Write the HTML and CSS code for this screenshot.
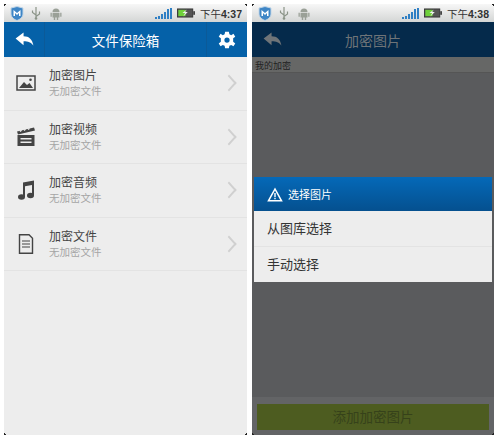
FILE: index.html
```html
<!DOCTYPE html>
<html>
    <head>
        <title>文件保险箱</title>
        <meta charset="utf-8">
        <link rel="stylesheet" href="styles.css">
    </head>
    <body>
        <main class="screens">
            <!-- vault list -->
            <section class="phone">
                <div class="status-bar">
                    <svg class="shield" viewBox="0 0 14 15"><path d="M1 2 L7 0.500 L13 2 V8 C13 11 10 13.500 7 14.500 C4 13.500 1 11 1 8 Z" fill="#3f86c6" stroke="#c3d6e6"/><path d="M3.500 10 V4 L7 7 L10.500 4 V10 H9 V7 L7 9 L5 7 V10 Z" fill="#fff"/></svg>
                    <svg class="usb" viewBox="0 0 10 14"><path d="M5 1 V13 M5 9 L1.500 6.500 V4.500 M5 10.500 L8.500 8 V5.500" fill="none" stroke="#8b9488" stroke-width="1.200"/><circle cx="5" cy="12.500" r="1.300" fill="#8b9488"/></svg>
                    <svg class="droid" viewBox="0 0 12 13"><path d="M2.500 5 A3.500 3.500 0 0 1 9.500 5 Z M2.500 5.800 H9.500 V10.500 H2.500 Z M0.500 5.800 H1.800 V9.800 H0.500 Z M10.200 5.800 H11.500 V9.800 H10.200 Z M3.800 10.500 H5.200 V13 H3.800 Z M6.800 10.500 H8.200 V13 H6.800 Z" fill="#9aa097"/></svg>
                    <span class="status-space"></span>
                    <svg class="signal" viewBox="0 0 18 11"><path d="M0 9 H2 V11 H0 Z M3 8 H5 V11 H3 Z M6 6 H8 V11 H6 Z M9 4 H11 V11 H9 Z M12 1 H14 V11 H12 Z M15 0 H17 V11 H15 Z" fill="#2f7fc4"/></svg>
                    <svg class="battery" viewBox="0 0 20 10"><rect x="0.500" y="0.500" width="17" height="9" fill="#555" stroke="#333"/><rect x="1.500" y="1.500" width="8" height="7" fill="#6fd13a"/><rect x="18" y="3" width="2" height="4" fill="#444"/><path d="M11 1 L6 5 H9 L7 9 L12 4 H9 Z" fill="#eee"/></svg>
                    <span class="time">下午<b>4:37</b></span>
                </div>
                <header class="title-bar">
                    <div class="bar-btn">
                        <svg class="back-icon" viewBox="0 0 20 16"><path d="M9 0.500 V4.500 C15 4.500 18.500 8 19.500 14.500 C17 11 14 9.800 9 9.800 V14 L0.500 7 Z" fill="#fff"/></svg>
                    </div>
                    <p class="bar-title">文件保险箱</p>
                    <div class="bar-btn bar-btn-right">
                        <svg class="gear-icon" viewBox="0 0 24 24"><path fill-rule="evenodd" d="M9.500 1 H14.500 L15.200 4.400 L17.600 5.500 L20.600 3.700 L23 7.500 L20.200 9.700 V14.300 L23 16.500 L20.600 20.300 L17.600 18.500 L15.200 19.600 L14.500 23 H9.500 L8.800 19.600 L6.400 18.500 L3.400 20.300 L1 16.500 L3.800 14.300 V9.700 L1 7.500 L3.400 3.700 L6.400 5.500 L8.800 4.400 Z M12 8.500 A3.500 3.500 0 1 0 12 15.500 A3.500 3.500 0 1 0 12 8.500 Z" fill="#fff"/></svg>
                    </div>
                </header>
                <ul class="vault-list">
                    <li class="vault-item">
                        <svg class="item-icon" viewBox="0 0 20 18"><rect x="1" y="2" width="18" height="14" fill="none" stroke="#444" stroke-width="1.500"/><path d="M3 14 L8 8 L11 11 L13.500 9 L17 14 Z" fill="#444"/><circle cx="14.500" cy="5.800" r="1.300" fill="#444"/></svg>
                        <div class="item-text">
                            <p class="item-name">加密图片</p>
                            <p class="item-sub">无加密文件</p>
                        </div>
                        <span class="chevron"></span>
                    </li>
                    <li class="vault-item">
                        <svg class="item-icon" viewBox="0 0 20 20"><path d="M1 4.500 L18 0.500 L19 3.500 L2 7.500 Z" fill="#444"/><path d="M4 4.500 L5.500 3.200 M8 3.500 L9.500 2.300 M12 2.600 L13.500 1.400" stroke="#eee" stroke-width="1.300"/><path fill-rule="evenodd" d="M1.500 8 H18.500 V19 H1.500 Z M4.500 11 V12.500 H15.500 V11 Z M4.500 14.500 V16 H15.500 V14.500 Z" fill="#444"/></svg>
                        <div class="item-text">
                            <p class="item-name">加密视频</p>
                            <p class="item-sub">无加密文件</p>
                        </div>
                        <span class="chevron"></span>
                    </li>
                    <li class="vault-item">
                        <svg class="item-icon" viewBox="0 0 20 20"><path d="M7 2.500 L18 0.500 V15 H16 V5 L9 6.300 V17 H7 Z" fill="#444"/><ellipse cx="5.500" cy="17" rx="3.500" ry="2.700" fill="#444"/><ellipse cx="14.500" cy="15.500" rx="3.500" ry="2.700" fill="#444"/></svg>
                        <div class="item-text">
                            <p class="item-name">加密音频</p>
                            <p class="item-sub">无加密文件</p>
                        </div>
                        <span class="chevron"></span>
                    </li>
                    <li class="vault-item">
                        <svg class="item-icon" viewBox="0 0 20 20"><path d="M3.500 0.800 H13 L16.500 4.300 V19.200 H3.500 Z" fill="none" stroke="#444" stroke-width="1.400"/><path d="M6 7 H14 M6 10 H14 M6 13 H14" stroke="#444" stroke-width="1.200"/></svg>
                        <div class="item-text">
                            <p class="item-name">加密文件</p>
                            <p class="item-sub">无加密文件</p>
                        </div>
                        <span class="chevron"></span>
                    </li>
                </ul>
            </section>

            <!-- picture picker, dimmed behind the dialog -->
            <section class="phone phone-dim">
                <div class="status-bar">
                    <svg class="shield" viewBox="0 0 14 15"><path d="M1 2 L7 0.500 L13 2 V8 C13 11 10 13.500 7 14.500 C4 13.500 1 11 1 8 Z" fill="#3f86c6" stroke="#c3d6e6"/><path d="M3.500 10 V4 L7 7 L10.500 4 V10 H9 V7 L7 9 L5 7 V10 Z" fill="#fff"/></svg>
                    <svg class="usb" viewBox="0 0 10 14"><path d="M5 1 V13 M5 9 L1.500 6.500 V4.500 M5 10.500 L8.500 8 V5.500" fill="none" stroke="#8b9488" stroke-width="1.200"/><circle cx="5" cy="12.500" r="1.300" fill="#8b9488"/></svg>
                    <svg class="droid" viewBox="0 0 12 13"><path d="M2.500 5 A3.500 3.500 0 0 1 9.500 5 Z M2.500 5.800 H9.500 V10.500 H2.500 Z M0.500 5.800 H1.800 V9.800 H0.500 Z M10.200 5.800 H11.500 V9.800 H10.200 Z M3.800 10.500 H5.200 V13 H3.800 Z M6.800 10.500 H8.200 V13 H6.800 Z" fill="#9aa097"/></svg>
                    <span class="status-space"></span>
                    <svg class="signal" viewBox="0 0 18 11"><path d="M0 9 H2 V11 H0 Z M3 8 H5 V11 H3 Z M6 6 H8 V11 H6 Z M9 4 H11 V11 H9 Z M12 1 H14 V11 H12 Z M15 0 H17 V11 H15 Z" fill="#2f7fc4"/></svg>
                    <svg class="battery" viewBox="0 0 20 10"><rect x="0.500" y="0.500" width="17" height="9" fill="#555" stroke="#333"/><rect x="1.500" y="1.500" width="8" height="7" fill="#6fd13a"/><rect x="18" y="3" width="2" height="4" fill="#444"/><path d="M11 1 L6 5 H9 L7 9 L12 4 H9 Z" fill="#eee"/></svg>
                    <span class="time">下午<b>4:38</b></span>
                </div>
                <header class="title-bar title-bar-dim">
                    <div class="bar-btn bar-btn-plain">
                        <svg class="back-icon" viewBox="0 0 20 16"><path d="M9 0.500 V4.500 C15 4.500 18.500 8 19.500 14.500 C17 11 14 9.800 9 9.800 V14 L0.500 7 Z" fill="#6f7478"/></svg>
                    </div>
                    <p class="bar-title">加密图片</p>
                    <div class="bar-btn bar-btn-plain"></div>
                </header>
                <p class="section-label">我的加密</p>
                <div class="dim-fill"></div>
                <div class="footer-bar">
                    <button class="add-button">添加加密图片</button>
                </div>

                <div class="dialog">
                    <div class="dialog-title">
                        <svg class="warn-icon" viewBox="0 0 16 15"><path fill-rule="evenodd" d="M8 0.500 L15.800 14.500 H0.200 Z M8 3.400 L2.800 13 H13.200 Z" fill="#fff"/><path d="M7.300 6 H8.700 V10 H7.300 Z M7.300 10.800 H8.700 V12.200 H7.300 Z" fill="#fff"/></svg>
                        <span>选择图片</span>
                    </div>
                    <p class="dialog-option">从图库选择</p>
                    <p class="dialog-option">手动选择</p>
                </div>
            </section>
        </main>
    </body>
</html>
```

FILE: styles.css
```css
body {
    margin: 0;
    background-color: white;
    font-family: "Liberation Sans", "Noto Sans CJK SC", sans-serif;
}

p {
    margin: 0;
}

.screens {
    display: flex;
    gap: 5px;
    padding: 4px 0 0 4px;
}

.phone {
    position: relative;
    display: flex;
    flex-direction: column;
    width: 243px;
    height: 431px;
    background-color: #ededed;
}

/* little dark notches the screen grab leaves at each corner */
.phone::after {
    content: "";
    position: absolute;
    inset: 0;
    pointer-events: none;
    background:
        linear-gradient(135deg, #222 2px, transparent 2px),
        linear-gradient(225deg, #222 2px, transparent 2px),
        linear-gradient(45deg, #222 2px, transparent 2px),
        linear-gradient(315deg, #222 2px, transparent 2px);
}

.phone-dim {
    width: 242px;
    background-color: #5a5b5d;
}

.status-bar {
    display: flex;
    align-items: center;
    height: 18px;
    padding: 0 5px 0 6px;
    background: linear-gradient(#f7f7f7, #d4d6d5);
    color: #333;
}

.shield {
    width: 14px;
    height: 15px;
}

.usb {
    width: 10px;
    height: 14px;
    margin-left: 7px;
}

.droid {
    width: 12px;
    height: 13px;
    margin-left: 9px;
}

.status-space {
    flex: 1;
}

.signal {
    width: 18px;
    height: 11px;
}

.battery {
    width: 18px;
    height: 10px;
    margin-left: 4px;
    margin-right: 5px;
}

.time {
    font-size: 10.5px;
    white-space: nowrap;
}

.title-bar {
    display: flex;
    align-items: center;
    height: 35px;
    background-color: #0561a8;
    color: white;
}

.title-bar-dim {
    background-color: #052a4b;
    color: #6f7478;
}

.bar-btn {
    display: flex;
    align-items: center;
    justify-content: center;
    width: 40px;
    height: 100%;
    border-right: 1px solid #0b5a98;
}

.bar-btn-right {
    border-right: none;
    border-left: 1px solid #0b5a98;
}

.bar-btn-plain {
    border: none;
}

.back-icon {
    width: 19px;
    height: 15px;
}

.gear-icon {
    width: 18px;
    height: 18px;
}

.bar-title {
    flex: 1;
    text-align: center;
    font-size: 13.5px;
}

.title-bar-dim .bar-title {
    font-size: 14px;
}

.vault-list {
    margin: 0;
    padding: 0;
    list-style: none;
}

.vault-item {
    display: flex;
    align-items: center;
    height: 53.5px;
    padding-left: 12px;
    border-bottom: 1px solid #e3e3e3;
    box-sizing: border-box;
}

.item-icon {
    width: 20px;
    height: 20px;
}

.item-text {
    flex: 1;
    margin-left: 13px;
    padding-top: 2px;
}

.item-name {
    font-size: 12px;
    line-height: 15px;
    color: #444;
}

.item-sub {
    font-size: 10.5px;
    line-height: 15px;
    color: #a5a5a5;
}

.chevron {
    width: 12px;
    height: 12px;
    margin-right: 12px;
    border-top: 2px solid #d0d0d0;
    border-right: 2px solid #d0d0d0;
    box-sizing: border-box;
    transform: scaleX(0.9) rotate(45deg);
}

.section-label {
    height: 16px;
    padding-left: 3px;
    background-color: #666766;
    border-bottom: 1px solid #555;
    box-sizing: border-box;
    font-size: 9px;
    line-height: 18px;
    color: #222;
}

.dim-fill {
    flex: 1;
}

.footer-bar {
    height: 38px;
    padding: 7px 5px 5px;
    background-color: #636466;
    box-sizing: border-box;
}

.add-button {
    display: block;
    width: 100%;
    height: 26px;
    padding: 0 0 2px;
    border: none;
    background-color: #4d5c20;
    color: #36421a;
    font-family: inherit;
    font-size: 13.5px;
}

.dialog {
    position: absolute;
    top: 173px;
    left: 2px;
    right: 2px;
    background-color: #ededed;
}

.dialog-title {
    display: flex;
    align-items: center;
    gap: 5px;
    height: 34px;
    padding-left: 13px;
    background: linear-gradient(#0569b8, #05508f);
    color: white;
    font-size: 11px;
}

.warn-icon {
    width: 16px;
    height: 15px;
}

.dialog-option {
    height: 35.5px;
    padding-left: 13px;
    border-bottom: 1px solid #e3e3e3;
    box-sizing: border-box;
    font-size: 13px;
    line-height: 35px;
    color: #333;
}

.dialog-option:last-child {
    border-bottom: none;
}
```
